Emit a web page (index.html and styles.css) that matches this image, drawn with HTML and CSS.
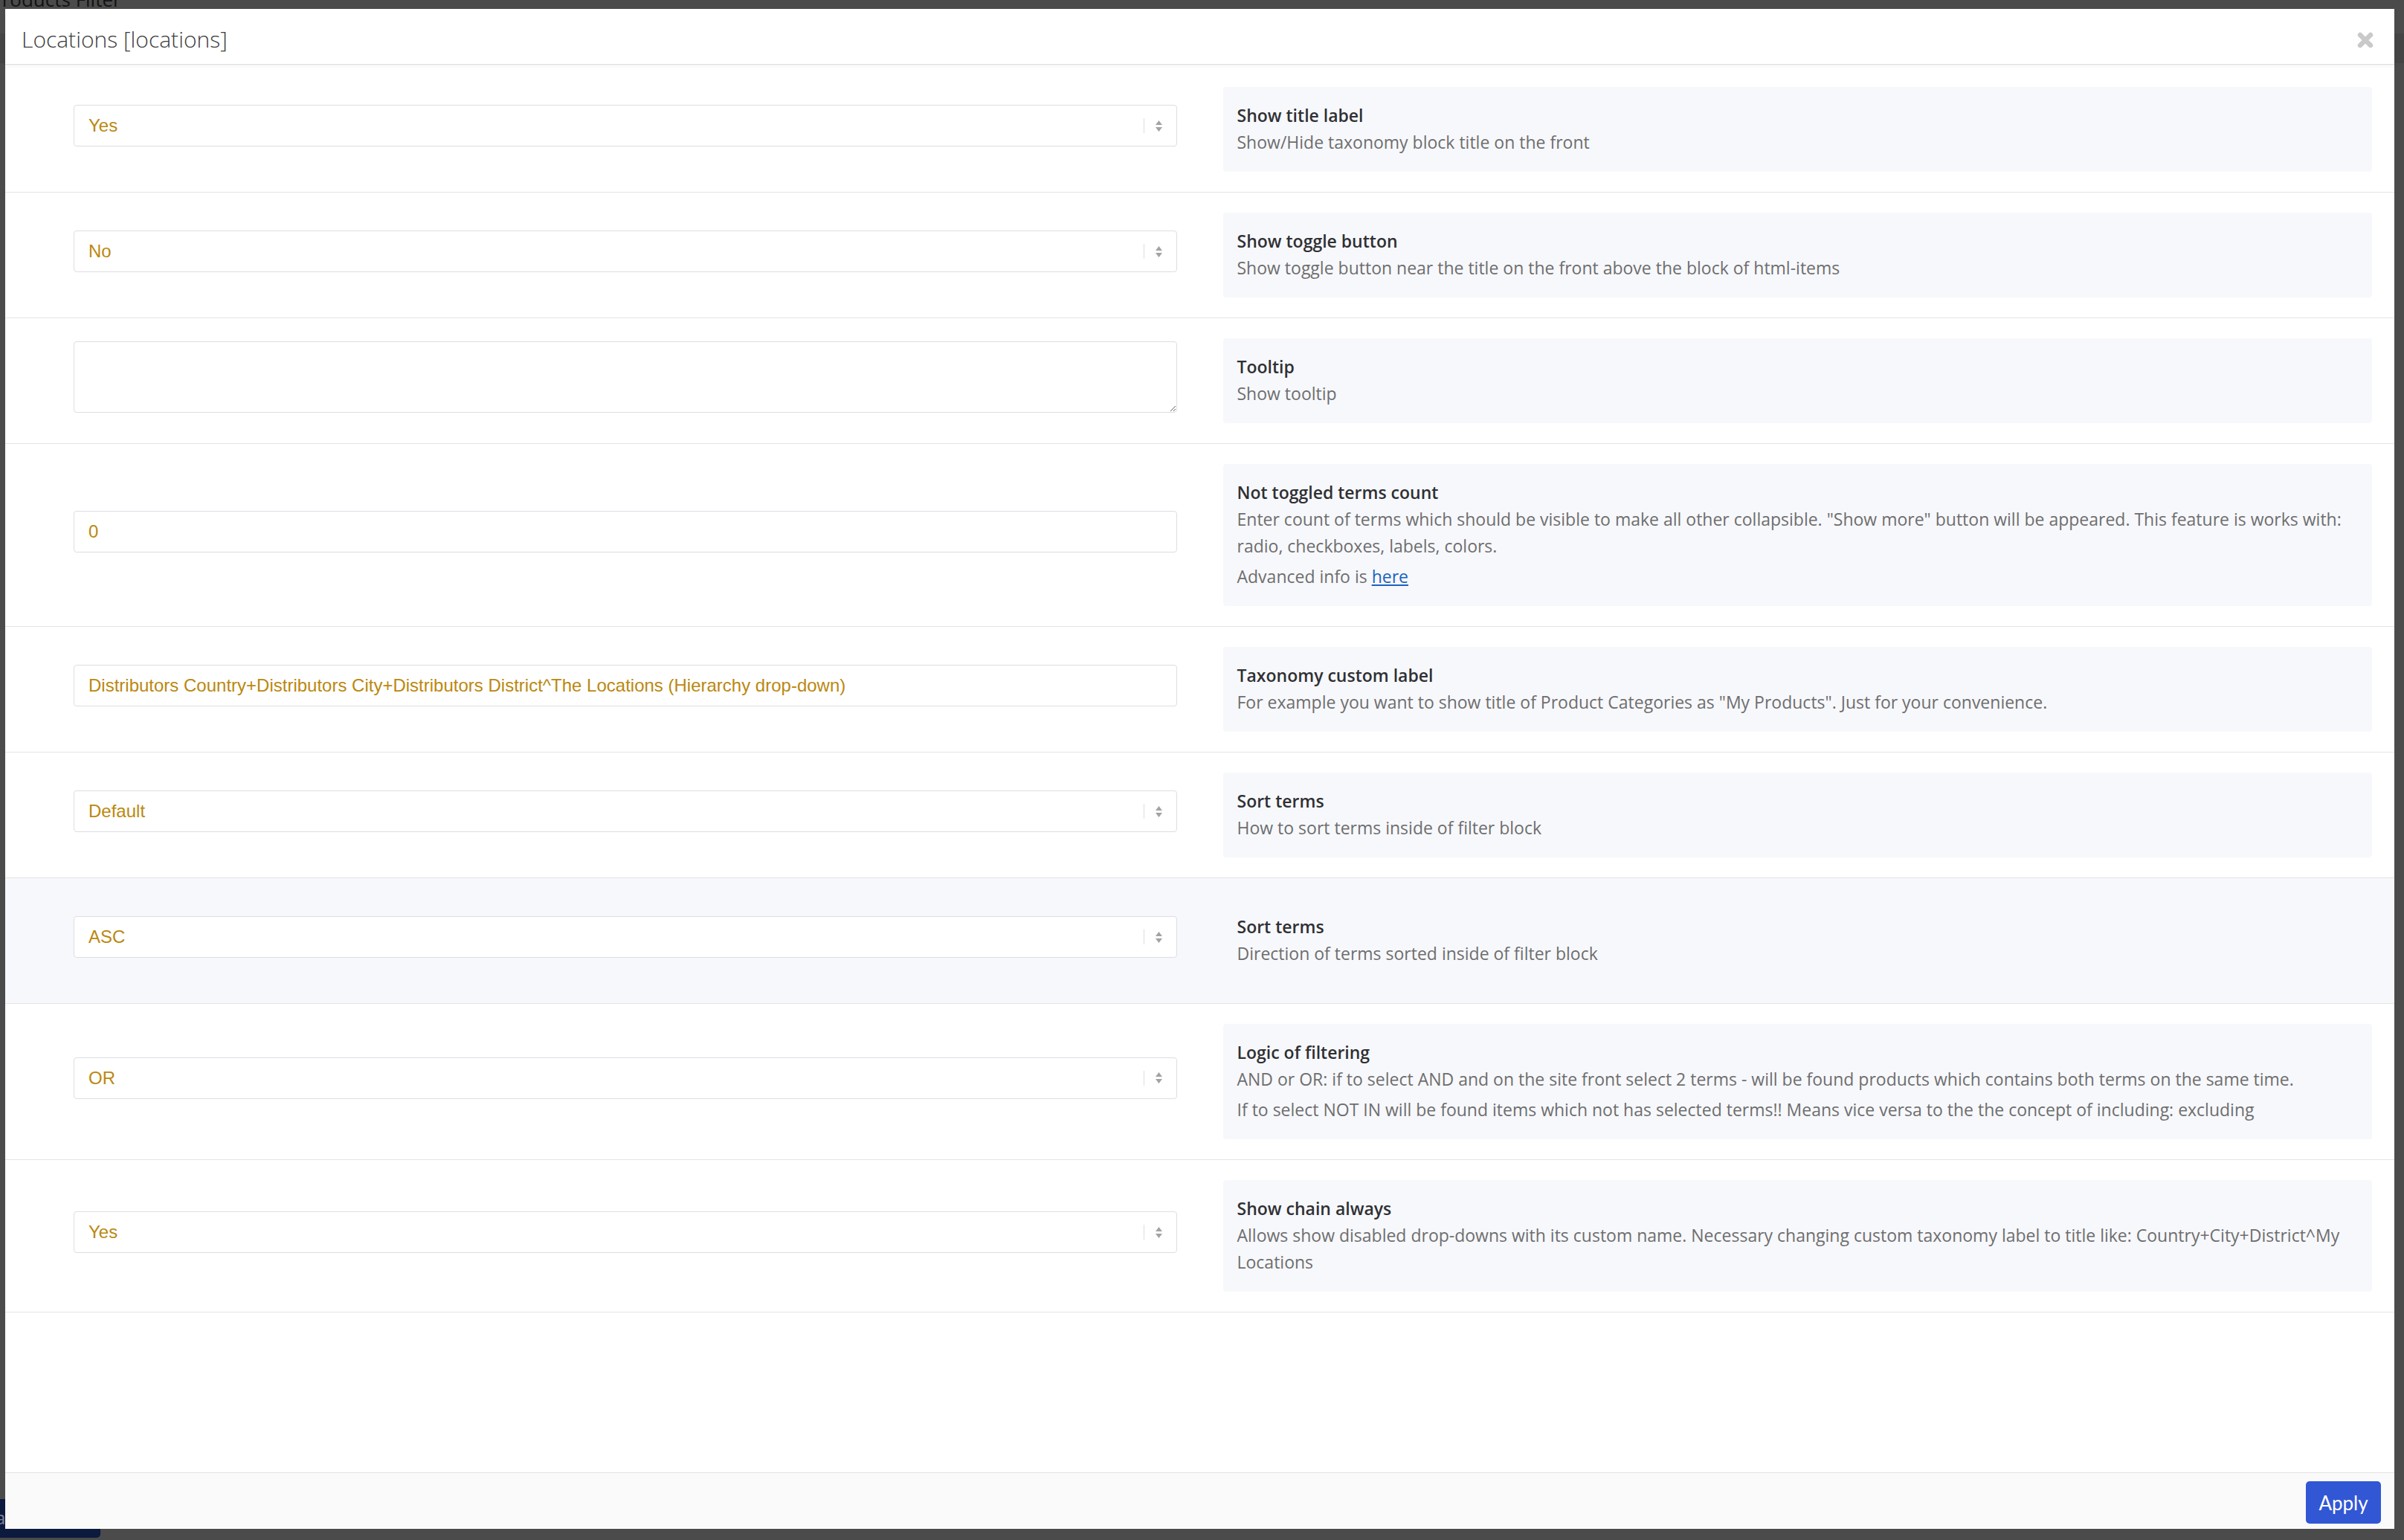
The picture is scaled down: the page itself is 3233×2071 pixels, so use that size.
FILE: index.html
```html
<!DOCTYPE html>
<html lang="en">
<head>
<meta charset="utf-8">
<title>Locations [locations]</title>
<link rel="stylesheet" href="styles.css">
</head>
<body>
<div class="backdrop">
  <div class="bg-title">Products Filter</div>
  <div class="bg-band"></div>
  <div class="bg-button">a</div>
</div>

<div class="modal">
  <header class="modal-header">
    <h2 class="modal-title">Locations [locations]</h2>
    <button class="close" type="button" aria-label="Close">
      <svg viewBox="0 0 22 22" width="22" height="22"><path d="M4 4 L18 18 M18 4 L4 18" stroke="#c9c9c9" stroke-width="6.5" stroke-linecap="round" fill="none"/></svg>
    </button>
  </header>

  <div class="modal-body">
    <div class="row">
      <div class="field">
        <div class="select"><span class="value">Yes</span><span class="sep"></span><svg class="arrows" viewBox="0 0 9 15" width="9" height="15"><path d="M4.5 0 L9 6 L0 6 Z M0 9 L9 9 L4.5 15 Z" fill="#a3a3a3"/></svg></div>
      </div>
      <div class="info"><div class="info-box">
        <div class="info-title">Show title label</div>
        <p class="info-desc">Show/Hide taxonomy block title on the front</p>
      </div></div>
    </div>

    <div class="row">
      <div class="field">
        <div class="select"><span class="value">No</span><span class="sep"></span><svg class="arrows" viewBox="0 0 9 15" width="9" height="15"><path d="M4.5 0 L9 6 L0 6 Z M0 9 L9 9 L4.5 15 Z" fill="#a3a3a3"/></svg></div>
      </div>
      <div class="info"><div class="info-box">
        <div class="info-title">Show toggle button</div>
        <p class="info-desc">Show toggle button near the title on the front above the block of html-items</p>
      </div></div>
    </div>

    <div class="row">
      <div class="field">
        <textarea class="textarea"></textarea>
      </div>
      <div class="info"><div class="info-box">
        <div class="info-title">Tooltip</div>
        <p class="info-desc">Show tooltip</p>
      </div></div>
    </div>

    <div class="row">
      <div class="field">
        <div class="input">0</div>
      </div>
      <div class="info"><div class="info-box">
        <div class="info-title">Not toggled terms count</div>
        <p class="info-desc">Enter count of terms which should be visible to make all other collapsible. "Show more" button will be appeared. This feature is works with: radio, checkboxes, labels, colors.</p>
        <p class="info-desc more">Advanced info is <a href="#">here</a></p>
      </div></div>
    </div>

    <div class="row">
      <div class="field">
        <div class="input">Distributors Country+Distributors City+Distributors District^The Locations (Hierarchy drop-down)</div>
      </div>
      <div class="info"><div class="info-box">
        <div class="info-title">Taxonomy custom label</div>
        <p class="info-desc">For example you want to show title of Product Categories as "My Products". Just for your convenience.</p>
      </div></div>
    </div>

    <div class="row">
      <div class="field">
        <div class="select"><span class="value">Default</span><span class="sep"></span><svg class="arrows" viewBox="0 0 9 15" width="9" height="15"><path d="M4.5 0 L9 6 L0 6 Z M0 9 L9 9 L4.5 15 Z" fill="#a3a3a3"/></svg></div>
      </div>
      <div class="info"><div class="info-box">
        <div class="info-title">Sort terms</div>
        <p class="info-desc">How to sort terms inside of filter block</p>
      </div></div>
    </div>

    <div class="row active">
      <div class="field">
        <div class="select"><span class="value">ASC</span><span class="sep"></span><svg class="arrows" viewBox="0 0 9 15" width="9" height="15"><path d="M4.5 0 L9 6 L0 6 Z M0 9 L9 9 L4.5 15 Z" fill="#a3a3a3"/></svg></div>
      </div>
      <div class="info"><div class="info-box">
        <div class="info-title">Sort terms</div>
        <p class="info-desc">Direction of terms sorted inside of filter block</p>
      </div></div>
    </div>

    <div class="row">
      <div class="field">
        <div class="select"><span class="value">OR</span><span class="sep"></span><svg class="arrows" viewBox="0 0 9 15" width="9" height="15"><path d="M4.5 0 L9 6 L0 6 Z M0 9 L9 9 L4.5 15 Z" fill="#a3a3a3"/></svg></div>
      </div>
      <div class="info"><div class="info-box">
        <div class="info-title">Logic of filtering</div>
        <p class="info-desc">AND or OR: if to select AND and on the site front select 2 terms - will be found products which contains both terms on the same time.</p>
        <p class="info-desc more">If to select NOT IN will be found items which not has selected terms!! Means vice versa to the the concept of including: excluding</p>
      </div></div>
    </div>

    <div class="row">
      <div class="field">
        <div class="select"><span class="value">Yes</span><span class="sep"></span><svg class="arrows" viewBox="0 0 9 15" width="9" height="15"><path d="M4.5 0 L9 6 L0 6 Z M0 9 L9 9 L4.5 15 Z" fill="#a3a3a3"/></svg></div>
      </div>
      <div class="info"><div class="info-box">
        <div class="info-title">Show chain always</div>
        <p class="info-desc">Allows show disabled drop-downs with its custom name. Necessary changing custom taxonomy label to title like: Country+City+District^My Locations</p>
      </div></div>
    </div>
  </div>

  <footer class="modal-footer">
    <button class="btn-apply" type="button">Apply</button>
  </footer>
</div>
</body>
</html>
```

FILE: styles.css
```css
html, body {
  margin: 0;
  padding: 0;
}

body {
  width: 3233px;
  height: 2071px;
  background: #4b4b4b;
  font-family: "Open Sans", "Noto Sans", sans-serif;
  position: relative;
  overflow: hidden;
}

/* page behind the overlay */
.backdrop {
  position: absolute;
  inset: 0;
}

.bg-title {
  position: absolute;
  left: -13px;
  top: -18px;
  font-size: 26px;
  line-height: 34px;
  color: #121212;
}

.bg-band {
  position: absolute;
  left: 0;
  right: 0;
  top: 45px;
  height: 40px;
  background: #444444;
}

.bg-button {
  position: absolute;
  left: 0;
  top: 2016px;
  width: 135px;
  height: 52px;
  background: #0c1a3e;
  border-radius: 0 0 5px 0;
  color: #7d849a;
  font-size: 24px;
  line-height: 50px;
  text-indent: -6px;
}

/* modal */
.modal {
  position: absolute;
  left: 7px;
  top: 12px;
  width: 3213px;
  height: 2044px;
  background: #ffffff;
  display: flex;
  flex-direction: column;
}

.modal-header {
  box-sizing: border-box;
  height: 75px;
  border-bottom: 1px solid #dedede;
  box-shadow: 0 2px 5px rgba(0, 0, 0, 0.05);
  display: flex;
  align-items: flex-start;
  justify-content: space-between;
  padding: 21px 28px 0 22px;
  position: relative;
  z-index: 1;
}

.modal-title {
  margin: 0;
  font-weight: 300;
  font-size: 30px;
  line-height: 40px;
  color: #3d3d3d;
}

.close {
  border: 0;
  background: none;
  padding: 0;
  margin-top: 10px;
  width: 22px;
  height: 22px;
  cursor: pointer;
}

.close svg {
  display: block;
}

.modal-body {
  flex: 1;
  padding-top: 3px;
}

.row {
  display: grid;
  grid-template-columns: 1fr 1fr;
  align-items: center;
  padding: 27px 0;
  border-bottom: 1px solid #e4e4e4;
}

.row.active {
  background: #f7f8fc;
}

.field {
  padding: 0 31px 10px 92px;
}

.info {
  padding: 0 30px 0 31px;
}

/* form controls */
.select,
.input {
  box-sizing: border-box;
  height: 56px;
  border: 1px solid #dcdee3;
  border-radius: 4px;
  background: #ffffff;
  display: flex;
  align-items: center;
  padding: 0 19px 0 19px;
  font-family: "Liberation Sans", Arial, sans-serif;
  font-size: 24px;
  color: #bb880f;
  white-space: nowrap;
  overflow: hidden;
}

.select .value {
  flex: 1;
}

.select .sep {
  width: 1px;
  height: 20px;
  background: #dedede;
  margin-right: 15px;
}

.select .arrows {
  display: block;
}

.textarea {
  box-sizing: border-box;
  display: block;
  width: 100%;
  height: 96px;
  border: 1px solid #dcdee3;
  border-radius: 4px;
  background: #ffffff;
  font-family: "Liberation Sans", Arial, sans-serif;
  font-size: 24px;
  color: #bb880f;
  padding: 10px 19px;
  margin: 0;
}

/* description boxes */
.info-box {
  background: #f7f8fc;
  border-radius: 4px;
  padding: 20px 19px 22px;
}

.info-title {
  font-weight: 600;
  font-size: 23px;
  line-height: 36px;
  color: #2f3033;
}

.info-desc {
  margin: 0;
  font-size: 23px;
  line-height: 36px;
  color: #6e6e6e;
}

.info-desc.more {
  margin-top: 5px;
}

.info-desc a {
  color: #1b63bf;
  text-decoration: underline;
}

/* footer */
.modal-footer {
  box-sizing: border-box;
  height: 76px;
  border-top: 1px solid #e1e1e1;
  background: #fafafa;
  display: flex;
  justify-content: flex-end;
  align-items: flex-start;
  padding: 11px 18px 0 0;
}

.btn-apply {
  height: 57px;
  width: 101px;
  border: 0;
  border-radius: 5px;
  background: #3257d4;
  color: #ffffff;
  font-family: "Lato", "Open Sans", sans-serif;
  font-size: 26px;
  padding: 0;
  cursor: pointer;
}
```
